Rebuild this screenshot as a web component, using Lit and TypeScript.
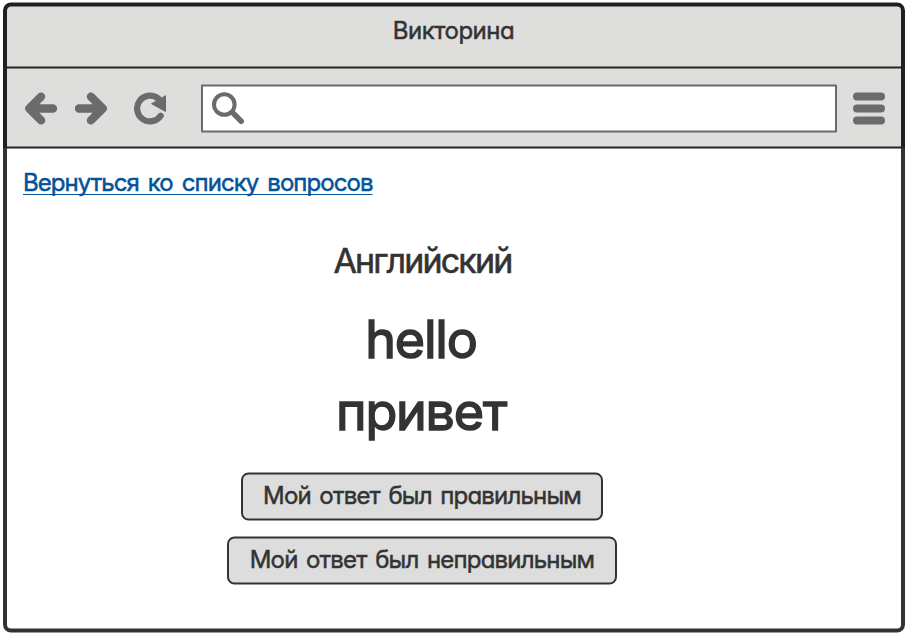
import { LitElement, html, css, svg } from "lit";
import { customElement, property } from "lit/decorators.js";

@customElement("answer-button")
class AnswerButton extends LitElement {
  @property({ type: Number }) width = 362;
  static styles = css`
    :host { display: block; }
    .button { position: relative; display: block; height: 49px; padding: 0; border: 0; background: none; font: inherit; color: inherit; letter-spacing: -0.8px; word-spacing: 2.5px; font-feature-settings: inherit; }
    .box { position: absolute; inset: 0; }
    .label { position: relative; display: block; height: 49px; line-height: 47px; text-align: center; white-space: nowrap; }
  `;
  render() {
    return html`<button class="button" style="width:${this.width}px">
      <svg class="box" width=${this.width} height="49">
        <rect x="1" y="1.5" width=${this.width - 2} height="46" rx="6.5" fill="#ddd" stroke="#333" stroke-width="2"/>
      </svg>
      <span class="label"><slot></slot></span>
    </button>`;
  }
}

const icons = {
  back: svg`<path d="M16.1 4.6 4.3 16.5l11.8 11.9M5 16.5h23" fill="none" stroke="#6b6b6b" stroke-width="8.3" stroke-linecap="round" stroke-linejoin="round"/>`,
  forward: svg`<path d="M15.9 4.6 27.7 16.5l-11.8 11.9M27 16.5H4" fill="none" stroke="#6b6b6b" stroke-width="8.3" stroke-linecap="round" stroke-linejoin="round"/>`,
  reload: svg`<path d="M24.2 6.5A12.9 12.9 0 1 0 26.7 23.7" fill="none" stroke="#6b6b6b" stroke-width="6.2" stroke-linecap="round"/><path d="M32 3v17.3L16.7 11.7z" fill="#6b6b6b"/>`,
  menu: svg`<path d="M4 4.5h24M4 16.5h24M4 28.5h24" stroke="#6b6b6b" stroke-width="8" stroke-linecap="round"/>`,
};

@customElement("app-root")
class AppRoot extends LitElement {
  static styles = css`
    :host { display: block; position: relative; box-sizing: border-box; width: 909px; height: 637px; padding: 0 8px 0 7px; overflow: hidden; background: #fff; color: #333; font: 400 24px Inter, "Liberation Sans", sans-serif; font-feature-settings: "cv11"; -webkit-text-stroke: 0.5px currentColor; stroke-linejoin: round; }
    .frame { position: absolute; inset: 0; }
    .title { position: relative; height: 68px; line-height: 62px; text-align: center; letter-spacing: -0.5px; padding-right: 1px; }
    .toolbar { position: relative; display: flex; align-items: center; height: 81px; padding-left: 18px; }
    .icon { flex: none; width: 32px; height: 33px; }
    .forward { margin-left: 18px; }
    .reload { margin-left: 27px; }
    .address { flex: none; width: 636px; height: 49px; margin-left: 35px; }
    .menu { margin-left: 16px; }
    .page { position: relative; padding: 19px 0 0 16px; }
    .link { display: block; width: max-content; line-height: 30px; color: #04529a; letter-spacing: -0.95px; word-spacing: 3.2px; text-decoration: underline 1.4px; text-underline-offset: 3px; text-decoration-skip-ink: none; }
    .quiz { display: flex; flex-direction: column; align-items: center; width: 830px; margin-left: -16px; }
    .topic { margin-top: 43px; padding-left: 1px; font-size: 34px; line-height: 40px; letter-spacing: -1.8px; -webkit-text-stroke-width: 0.6px; }
    .word { padding-right: 2px; font-size: 52px; line-height: 60px; letter-spacing: -1.2px; -webkit-text-stroke-width: 1.5px; }
    .source { margin-top: 29px; }
    .translation { margin-top: 12px; }
    .right { margin-top: 30px; }
    .wrong { margin-top: 15px; }
  `;
  render() {
    return html`
      <svg class="frame" width="909" height="637">
        <path d="M5 148.5V10.5a6 6 0 0 1 6-6h886a6 6 0 0 1 6 6v138" fill="#dededd" stroke="#231f20" stroke-width="4"/>
        <path d="M7 67.5h894M7 147.5h894" stroke="#262525" stroke-width="2"/>
        <path d="M5 148v476.5a6 6 0 0 0 6 6h886a6 6 0 0 0 6-6V148" fill="none" stroke="#333" stroke-width="4"/>
      </svg>
      <div class="title"><span>Викторина</span></div>
      <div class="toolbar">
        <svg class="icon">${icons.back}</svg>
        <svg class="icon forward">${icons.forward}</svg>
        <svg class="icon reload">${icons.reload}</svg>
        <svg class="address">
          <rect x="1" y="1.5" width="634" height="46" fill="#fff" stroke="#6b6b6b" stroke-width="2"/>
          <circle cx="23.3" cy="20.5" r="10.3" fill="none" stroke="#6b6b6b" stroke-width="4"/>
          <path d="m31.5 28.5 8.7 8.7" stroke="#6b6b6b" stroke-width="5.5" stroke-linecap="round"/>
        </svg>
        <svg class="icon menu">${icons.menu}</svg>
      </div>
      <div class="page">
        <a class="link">Вернуться ко списку вопросов</a>
        <div class="quiz">
          <div class="topic">Английский</div>
          <div class="word source">hello</div>
          <div class="word translation">привет</div>
          <answer-button class="right" .width=${362}>Мой ответ был правильным</answer-button>
          <answer-button class="wrong" .width=${390}>Мой ответ был неправильным</answer-button>
        </div>
      </div>`;
  }
}
